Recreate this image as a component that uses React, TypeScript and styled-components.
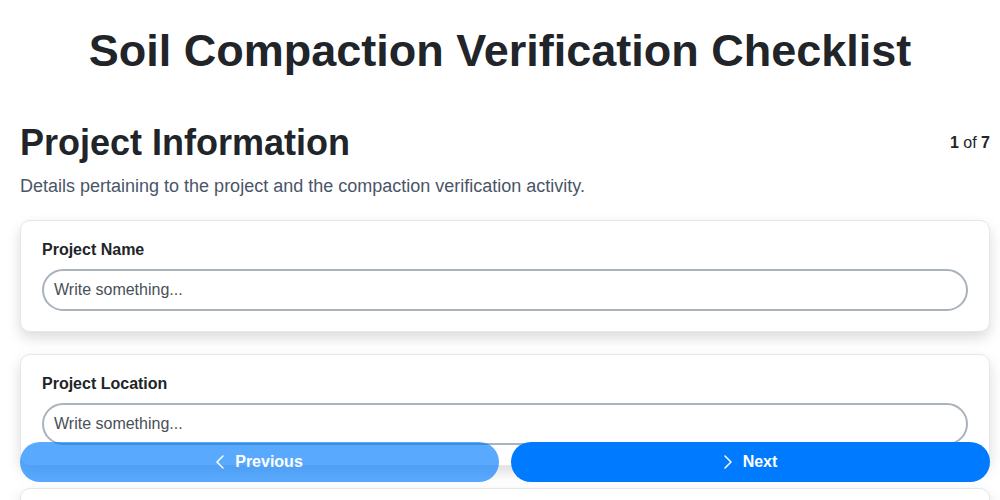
import React from "react";
import styled, { createGlobalStyle } from "styled-components";
import { ChevronLeft, ChevronRight } from "lucide-react";

const GlobalStyle = createGlobalStyle`
  * { box-sizing: border-box; }
  body {
    margin: 0;
    background: #ffffff;
    font-family: "Liberation Sans", Arial, sans-serif;
    color: #212529;
  }
`;

const Title = styled.h1`
  margin: 0;
  padding-top: 24px;
  font-size: 45px;
  line-height: 53px;
  font-weight: 700;
  text-align: center;
  color: #212529;
`;

const Page = styled.div`
  padding: 0 10px 80px 20px;
`;

const SectionHeader = styled.div`
  display: flex;
  align-items: center;
  justify-content: space-between;
  margin-top: 44px;
`;

const SectionTitle = styled.h2`
  margin: 0;
  font-size: 36px;
  line-height: 43px;
  font-weight: 700;
  color: #212529;
`;

const Counter = styled.span`
  font-size: 16px;
  color: #212529;
  b {
    font-weight: 700;
  }
`;

const Description = styled.p`
  margin: 10px 0 21px;
  font-size: 18px;
  line-height: 25px;
  color: #4a5568;
`;

const Fields = styled.div`
  display: flex;
  flex-direction: column;
  gap: 22px;
`;

const Card = styled.div`
  background: #ffffff;
  border: 1px solid #e6e7eb;
  border-radius: 10px;
  padding: 19px 21px 20px 21px;
  box-shadow: 0 6px 14px rgba(0, 0, 0, 0.14);
`;

const Label = styled.label`
  display: block;
  font-size: 16px;
  line-height: 20px;
  font-weight: 700;
  color: #212529;
  margin-bottom: 9px;
`;

const Input = styled.input`
  display: block;
  width: 100%;
  height: 42px;
  padding: 0 10px;
  border: 2px solid #aab2bb;
  border-radius: 21px;
  font-family: "Liberation Sans", Arial, sans-serif;
  font-size: 16px;
  color: #212529;
  background: #ffffff;
  outline: none;
  &::placeholder {
    color: #495057;
  }
`;

const NavBar = styled.div`
  position: fixed;
  left: 20px;
  right: 10px;
  bottom: 18px;
  display: grid;
  grid-template-columns: 1fr 1fr;
  gap: 12px;
`;

const NavButton = styled.button<{ $disabled?: boolean }>`
  display: flex;
  align-items: center;
  justify-content: center;
  gap: 3px;
  height: 40px;
  padding: 0 8px 0 0;
  border: none;
  border-radius: 20px;
  background: #007bff;
  color: #ffffff;
  font-family: "Liberation Sans", Arial, sans-serif;
  font-size: 16px;
  font-weight: 700;
  opacity: ${(p) => (p.$disabled ? 0.65 : 1)};
  cursor: ${(p) => (p.$disabled ? "default" : "pointer")};
`;

const fields = ["Project Name", "Project Location", "Contractor"];

export default function App() {
  return (
    <>
      <GlobalStyle />
      <Title>Soil Compaction Verification Checklist</Title>
      <Page>
        <SectionHeader>
          <SectionTitle>Project Information</SectionTitle>
          <Counter>
            <b>1</b> of <b>7</b>
          </Counter>
        </SectionHeader>
        <Description>
          Details pertaining to the project and the compaction verification activity.
        </Description>
        <Fields>
          {fields.map((f) => (
            <Card key={f}>
              <Label>{f}</Label>
              <Input placeholder="Write something..." />
            </Card>
          ))}
        </Fields>
      </Page>
      <NavBar>
        <NavButton $disabled>
          <ChevronLeft size={24} strokeWidth={1.5} />
          Previous
        </NavButton>
        <NavButton>
          <ChevronRight size={24} strokeWidth={1.5} />
          Next
        </NavButton>
      </NavBar>
    </>
  );
}
